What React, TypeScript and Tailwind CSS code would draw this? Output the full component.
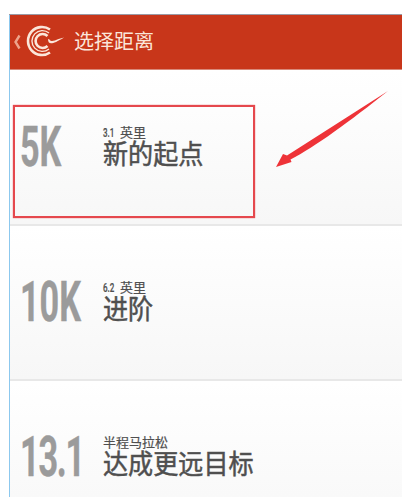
const font = "font-['Roboto','Noto_Sans_CJK_SC',sans-serif]";

function Row({ big, num, sub, title, border, tight }: { big: string; num?: string; sub: string; title: string; border: boolean; tight?: boolean }) {
  return (
    <div className={`h-[155px] pl-[10px] pt-[53px] flex items-start bg-gradient-to-b from-white to-[#f7f7f7] ${border ? "border-b-2 border-[#e8e8e8]" : ""}`}>
      <div className="w-[83px] shrink-0 -mt-[5px]">
        <div className={`origin-left scale-x-[0.61] text-[56px] leading-[56px] font-bold text-[#9b9b9b] whitespace-nowrap [-webkit-text-stroke:0.4px_#9b9b9b] ${tight ? "tracking-[-2px]" : ""}`}>{big}</div>
      </div>
      <div className="text-[#4f4f4f] mt-[1px]">
        <div className="text-[13px] leading-[15px] h-[15px] whitespace-nowrap flex [-webkit-text-stroke:0.2px_#4f4f4f]">
          {num ? <span className="inline-block w-[17px] origin-left scale-x-[0.62] font-medium">{num}</span> : null}
          <span>{sub}</span>
        </div>
        <div className="mt-[1px] text-[27px] leading-[29px] whitespace-nowrap origin-left scale-x-[0.93] [-webkit-text-stroke:0.5px_#4f4f4f]">{title}</div>
      </div>
    </div>
  );
}

export default function App() {
  return (
    <div className={`relative w-[402px] h-[497px] overflow-hidden bg-white ${font}`}>
      <div className="h-[15px] ml-[9px] border-b border-[#9a9aa5]" />
      <div className="ml-[9px] border-l border-[#8cc8ee]">
        <header className="h-[55px] bg-[#c8361a] flex items-center pl-[3px] text-[#fbe6da] border-b border-[#d9897a]">
          <svg width="8" height="16" viewBox="0 0 8 16" className="shrink-0">
            <path d="M6.5 1.5 L2.5 8 L6.5 14.5" fill="none" stroke="#eda48c" strokeWidth="2.4" />
          </svg>
          <svg width="50" height="36" viewBox="0 0 50 36" className="shrink-0">
            <g fill="none" stroke="#fbe6da">
              <path d="M29 5.5 A14 14 0 1 0 29 28.5" strokeWidth="2.6" />
              <path d="M28 9 A10.4 10.4 0 1 0 28 25" strokeWidth="1.4" />
              <path d="M26.5 12 A7 7 0 1 0 26.5 22" strokeWidth="2.6" />
            </g>
            <path d="M27 15 C27 21 31 21 43 13.5 L37.5 15 C33 17 30 18 28.5 15.5 Z" fill="#fbe6da" />
          </svg>
          <div className="ml-[3px] text-[20px] leading-[24px] whitespace-nowrap">选择距离</div>
        </header>
        <div className="pt-[1px]">
          <Row big="5K" num="3.1" sub="英里" title="新的起点" border />
          <Row big="10K" num="6.2" sub="英里" title="进阶" border />
          <Row big="13.1" sub="半程马拉松" title="达成更远目标" border={false} tight />
        </div>
      </div>
      <div className="absolute left-[13px] top-[105px] w-[242px] h-[113px] border-2 border-[#e5484d] shadow-[0_0_1px_#e5484d]" />
      <svg className="absolute left-[270px] top-[85px]" width="125" height="90" viewBox="0 0 125 90">
        <path d="M118 6 L17 70.5 L13 69 L6 82 L21.5 77 L20.5 74.5 C45 62 80 36 118 6 Z" fill="#ee3338" />
      </svg>
    </div>
  );
}
